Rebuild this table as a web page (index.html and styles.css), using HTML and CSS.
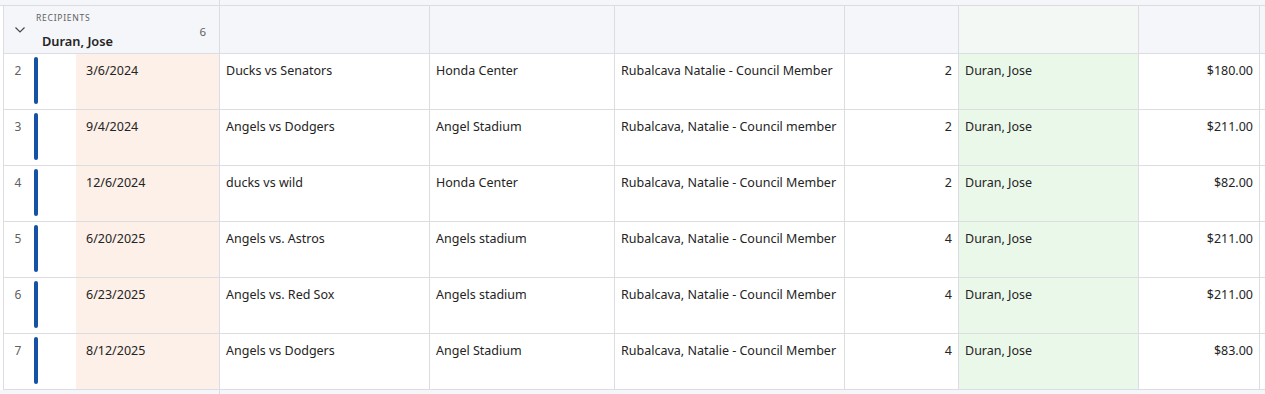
FILE: index.html
```html
<!DOCTYPE html>
<html>
<head>
<meta charset="utf-8">
<link rel="stylesheet" href="styles.css">
</head>
<body>
<div class="grid">
  <div class="strip"><div class="strip-left"></div></div>
  <div class="row head">
    <div class="group">
      <svg class="chev" width="10" height="6" viewBox="0 0 10 6"><path d="M0.5 0.5 L5 5 L9.5 0.5" fill="none" stroke="#444" stroke-width="1.1"/></svg>
      <div class="group-text">
        <div class="group-label">RECIPIENTS</div>
        <div class="group-name">Duran, Jose</div>
      </div>
      <div class="group-count">6</div>
    </div>
    <div class="c event"></div>
    <div class="c venue"></div>
    <div class="c official"></div>
    <div class="c qty"></div>
    <div class="c recip hdr-recip"></div>
    <div class="c amount"></div>
    <div class="c extra"></div>
  </div>

  <div class="row">
    <div class="c num"><span class="n">2</span><span class="bar"></span></div>
    <div class="c date">3/6/2024</div>
    <div class="c event">Ducks vs Senators</div>
    <div class="c venue">Honda Center</div>
    <div class="c official">Rubalcava Natalie - Council Member</div>
    <div class="c qty">2</div>
    <div class="c recip">Duran, Jose</div>
    <div class="c amount">$180.00</div>
    <div class="c extra"></div>
  </div>
  <div class="row">
    <div class="c num"><span class="n">3</span><span class="bar"></span></div>
    <div class="c date">9/4/2024</div>
    <div class="c event">Angels vs Dodgers</div>
    <div class="c venue">Angel Stadium</div>
    <div class="c official">Rubalcava, Natalie - Council member</div>
    <div class="c qty">2</div>
    <div class="c recip">Duran, Jose</div>
    <div class="c amount">$211.00</div>
    <div class="c extra"></div>
  </div>
  <div class="row">
    <div class="c num"><span class="n">4</span><span class="bar"></span></div>
    <div class="c date">12/6/2024</div>
    <div class="c event">ducks vs wild</div>
    <div class="c venue">Honda Center</div>
    <div class="c official">Rubalcava, Natalie - Council Member</div>
    <div class="c qty">2</div>
    <div class="c recip">Duran, Jose</div>
    <div class="c amount">$82.00</div>
    <div class="c extra"></div>
  </div>
  <div class="row">
    <div class="c num"><span class="n">5</span><span class="bar"></span></div>
    <div class="c date">6/20/2025</div>
    <div class="c event">Angels vs. Astros</div>
    <div class="c venue">Angels stadium</div>
    <div class="c official">Rubalcava, Natalie - Council Member</div>
    <div class="c qty">4</div>
    <div class="c recip">Duran, Jose</div>
    <div class="c amount">$211.00</div>
    <div class="c extra"></div>
  </div>
  <div class="row">
    <div class="c num"><span class="n">6</span><span class="bar"></span></div>
    <div class="c date">6/23/2025</div>
    <div class="c event">Angels vs. Red Sox</div>
    <div class="c venue">Angels stadium</div>
    <div class="c official">Rubalcava, Natalie - Council Member</div>
    <div class="c qty">4</div>
    <div class="c recip">Duran, Jose</div>
    <div class="c amount">$211.00</div>
    <div class="c extra"></div>
  </div>
  <div class="row">
    <div class="c num"><span class="n">7</span><span class="bar"></span></div>
    <div class="c date">8/12/2025</div>
    <div class="c event">Angels vs Dodgers</div>
    <div class="c venue">Angel Stadium</div>
    <div class="c official">Rubalcava, Natalie - Council Member</div>
    <div class="c qty">4</div>
    <div class="c recip">Duran, Jose</div>
    <div class="c amount">$83.00</div>
    <div class="c extra"></div>
  </div>
  <div class="foot"><div class="strip-left"></div></div>
</div>
</body>
</html>
```
FILE: styles.css
```css
html, body {
  margin: 0;
  padding: 0;
  background: #ffffff;
  overflow: hidden;
}
body {
  font-family: "Noto Sans", "Open Sans", sans-serif;
  font-size: 12.5px;
  color: #242424;
}
.grid {
  width: 1265px;
}
.strip {
  height: 5px;
  background: #f5f6fa;
  border-bottom: 1px solid #dcdde3;
  display: flex;
}
.strip-left {
  width: 219px;
  flex-shrink: 0;
  border-right: 1px solid #dcdde3;
}
.row {
  display: flex;
  height: 55px;
  border-bottom: 1px solid #dcdde3;
  margin-left: 3px;
  border-left: 1px solid #dcdde3;
}
.row.head {
  height: 47px;
  background: #f5f6fa;
}
.c {
  box-sizing: border-box;
  flex-shrink: 0;
  border-right: 1px solid #dcdde3;
  padding: 8px 6px 0 6px;
  line-height: 18px;
  white-space: nowrap;
  overflow: hidden;
}
.group {
  box-sizing: border-box;
  flex-shrink: 0;
  width: 216px;
  border-right: 1px solid #dcdde3;
  display: flex;
  position: relative;
}
.chev {
  margin: 21px 0 0 11px;
}
.group-text {
  margin-left: 11px;
}
.group-label {
  margin-top: 6px;
  font-size: 8.6px;
  letter-spacing: 0.7px;
  color: #616161;
  line-height: 12px;
}
.group-name {
  margin: 8px 0 0 6px;
  font-weight: 600;
  font-size: 12.8px;
  line-height: 18px;
  color: #242424;
}
.group-count {
  position: absolute;
  right: 13px;
  top: 18px;
  font-size: 11.5px;
  color: #616161;
}
.num {
  width: 72px;
  border-right: none;
  padding: 0;
  display: flex;
  align-items: flex-start;
}
.n {
  width: 22px;
  text-align: center;
  padding-top: 8px;
  padding-left: 3px;
  color: #616161;
  font-size: 12px;
}
.bar {
  width: 4px;
  height: 47px;
  margin: 3px 0 0 5px;
  border-radius: 2px;
  background: #1552a5;
}
.date {
  width: 144px;
  background: #fdf0e8;
  padding-left: 10px;
}
.event { width: 210px; }
.venue { width: 185px; }
.official { width: 230px; }
.qty { width: 114px; text-align: right; }
.recip { width: 180px; background: #eaf8ea; }
.hdr-recip { background: #f3f8f5; }
.amount { width: 121px; text-align: right; }
.extra { flex: 1 1 0; min-width: 0; border-right: none; }
.foot {
  height: 10px;
  background: #f5f6fa;
  display: flex;
}
```
